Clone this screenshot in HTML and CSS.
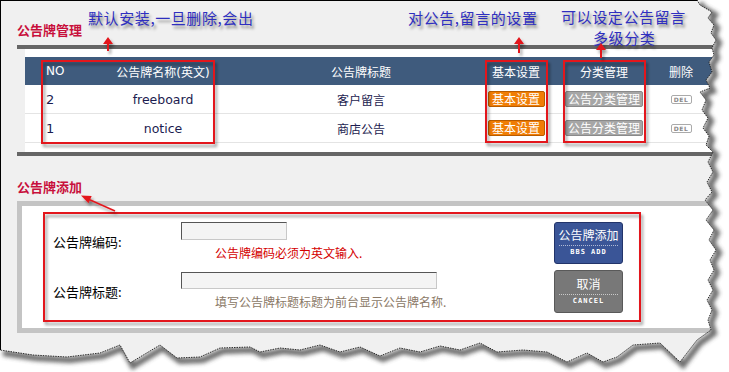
FILE: index.html
```html
<!DOCTYPE html>
<html lang="zh-CN">
<head>
<meta charset="utf-8">
<title>公告牌管理</title>
<link rel="stylesheet" href="styles.css">
</head>
<body>
<div class="page">
  <div class="sec-head sec-head-1"><h2 class="title">公告牌管理</h2></div>
  <div class="bar"></div>
  <div class="board">
    <div class="grid-row thead">
      <div class="cell cell-no">NO</div>
      <div class="cell">公告牌名称(英文)</div>
      <div class="cell">公告牌标题</div>
      <div class="cell">基本设置</div>
      <div class="cell">分类管理</div>
      <div class="cell">删除</div>
    </div>
    <div class="grid-row trow">
      <div class="cell cell-no">2</div>
      <div class="cell latin">freeboard</div>
      <div class="cell">客户留言</div>
      <div class="cell"><span class="tbtn tbtn-orange">基本设置</span></div>
      <div class="cell"><span class="tbtn tbtn-gray">公告分类管理</span></div>
      <div class="cell"><span class="del">DEL</span></div>
    </div>
    <div class="grid-row trow">
      <div class="cell cell-no">1</div>
      <div class="cell latin">notice</div>
      <div class="cell">商店公告</div>
      <div class="cell"><span class="tbtn tbtn-orange">基本设置</span></div>
      <div class="cell"><span class="tbtn tbtn-gray">公告分类管理</span></div>
      <div class="cell"><span class="del">DEL</span></div>
    </div>
  </div>
  <div class="bar"></div>
  <div class="sec-head sec-head-2"><h2 class="title">公告牌添加</h2></div>
  <div class="formbox">
    <div class="fields">
      <div class="frow">
        <div class="label">公告牌编码:</div>
        <div class="field">
          <span class="input input-short"></span>
          <div class="hint hint-red">公告牌编码必须为英文输入.</div>
        </div>
      </div>
      <div class="frow">
        <div class="label">公告牌标题:</div>
        <div class="field">
          <span class="input input-long"></span>
          <div class="hint hint-brown">填写公告牌标题标题为前台显示公告牌名称.</div>
        </div>
      </div>
    </div>
    <div class="btns">
      <div class="btn btn-blue">
        <div class="btn-main">公告牌添加</div>
        <div class="btn-sep"></div>
        <div class="btn-sub">BBS ADD</div>
      </div>
      <div class="btn btn-gray">
        <div class="btn-main">取消</div>
        <div class="btn-sep"></div>
        <div class="btn-sub">CANCEL</div>
      </div>
    </div>
  </div>
</div>

<div class="note note-1">默认安装,一旦删除,会出</div>
<div class="note note-2">对公告,留言的设置</div>
<div class="note note-3">可以设定公告留言</div>
<div class="note note-4">多级分类</div>

<svg class="overlay" width="729" height="372" viewBox="0 0 729 372">
  <defs>
    <filter id="sh" x="-20%" y="-20%" width="140%" height="140%">
      <feDropShadow dx="2" dy="3" stdDeviation="1.8" flood-color="#000" flood-opacity=".4"/>
    </filter>
  </defs>
  <g filter="url(#sh)" fill="none" stroke="#e3191f" stroke-width="2">
    <rect x="42" y="61" width="172" height="82"/>
    <rect x="486" y="61" width="61" height="81"/>
    <rect x="564" y="61" width="81" height="81"/>
    <rect x="44" y="213" width="596" height="108"/>
  </g>
  <g filter="url(#sh)" fill="#e3191f">
    <path d="M108 37 L113 44 L109 44 L109 51 L107 51 L107 44 L103 44 Z"/>
    <path d="M519 37 L524 44 L520 44 L520 53 L518 53 L518 44 L514 44 Z"/>
    <path d="M601 43 L606 50 L602 50 L602 58 L600 58 L600 50 L596 50 Z"/>
    <path d="M115 211 L88 199" stroke="#e3191f" stroke-width="1.6" fill="none"/>
    <polygon points="81,195.5 91.7,196 88.5,203.2"/>
  </g>
</svg>

<svg class="overlay tear" width="729" height="372" viewBox="0 0 729 372">
  <defs>
    <filter id="blur" x="-10%" y="-10%" width="120%" height="120%">
      <feGaussianBlur stdDeviation="2.2"/>
    </filter>
    <clipPath id="outside">
      <path d="M697,0 L700,5 L712,12 L708,18 L714,25 L711,33 L716,40 L712,48 L714,55 L709,62 L712,72 L706,80 L710,88 L700,92 L706,100 L702,110 L708,118 L703,128 L709,136 L706,145 L713,152 L708,162 L713,172 L707,182 L712,192 L705,200 L713,210 L706,220 L714,230 L709,240 L716,250 L710,260 L714,270 L708,280 L713,290 L707,300 L712,310 L708,320 L711,330 L697,340 L680,362 L660,343 L633,345 L617,357 L603,362 L587,353 L567,362 L547,352 L523,350 L497,352 L480,343 L460,350 L440,346 L420,352 L400,348 L380,356 L360,347 L340,352 L320,345 L300,350 L280,348 L260,352 L250,347 L220,348 L200,357 L177,358 L160,345 L140,357 L130,363 L120,345 L100,353 L67,357 L33,355 L0,350 L0,372 L729,372 L729,0 Z"/>
    </clipPath>
  </defs>
  <path fill="#ffffff" d="M697,0 L700,5 L712,12 L708,18 L714,25 L711,33 L716,40 L712,48 L714,55 L709,62 L712,72 L706,80 L710,88 L700,92 L706,100 L702,110 L708,118 L703,128 L709,136 L706,145 L713,152 L708,162 L713,172 L707,182 L712,192 L705,200 L713,210 L706,220 L714,230 L709,240 L716,250 L710,260 L714,270 L708,280 L713,290 L707,300 L712,310 L708,320 L711,330 L697,340 L680,362 L660,343 L633,345 L617,357 L603,362 L587,353 L567,362 L547,352 L523,350 L497,352 L480,343 L460,350 L440,346 L420,352 L400,348 L380,356 L360,347 L340,352 L320,345 L300,350 L280,348 L260,352 L250,347 L220,348 L200,357 L177,358 L160,345 L140,357 L130,363 L120,345 L100,353 L67,357 L33,355 L0,350 L0,372 L729,372 L729,0 Z"/>
  <g clip-path="url(#outside)">
    <path transform="translate(3,3)" fill="none" stroke="#444" stroke-width="6" opacity=".8" filter="url(#blur)" d="M697,0 L700,5 L712,12 L708,18 L714,25 L711,33 L716,40 L712,48 L714,55 L709,62 L712,72 L706,80 L710,88 L700,92 L706,100 L702,110 L708,118 L703,128 L709,136 L706,145 L713,152 L708,162 L713,172 L707,182 L712,192 L705,200 L713,210 L706,220 L714,230 L709,240 L716,250 L710,260 L714,270 L708,280 L713,290 L707,300 L712,310 L708,320 L711,330 L697,340 L680,362 L660,343 L633,345 L617,357 L603,362 L587,353 L567,362 L547,352 L523,350 L497,352 L480,343 L460,350 L440,346 L420,352 L400,348 L380,356 L360,347 L340,352 L320,345 L300,350 L280,348 L260,352 L250,347 L220,348 L200,357 L177,358 L160,345 L140,357 L130,363 L120,345 L100,353 L67,357 L33,355 L0,350"/>
  </g>
  <path fill="none" stroke="#000" stroke-width="0.8" stroke-dasharray="1.5 1" d="M697,0 L700,5 L712,12 L708,18 L714,25 L711,33 L716,40 L712,48 L714,55 L709,62 L712,72 L706,80 L710,88 L700,92 L706,100 L702,110 L708,118 L703,128 L709,136 L706,145 L713,152 L708,162 L713,172 L707,182 L712,192 L705,200 L713,210 L706,220 L714,230 L709,240 L716,250 L710,260 L714,270 L708,280 L713,290 L707,300 L712,310 L708,320 L711,330 L697,340 L680,362 L660,343 L633,345 L617,357 L603,362 L587,353 L567,362 L547,352 L523,350 L497,352 L480,343 L460,350 L440,346 L420,352 L400,348 L380,356 L360,347 L340,352 L320,345 L300,350 L280,348 L260,352 L250,347 L220,348 L200,357 L177,358 L160,345 L140,357 L130,363 L120,345 L100,353 L67,357 L33,355 L0,350"/>
</svg>
</body>
</html>
```

FILE: styles.css
```css
* {
  box-sizing: border-box;
}

body {
  margin: 0;
  width: 729px;
  height: 372px;
  overflow: hidden;
  position: relative;
  background: #fff;
  font-family: "DejaVu Sans", "Noto Sans CJK SC", sans-serif;
}

.page {
  width: 729px;
  height: 372px;
  background: #f0f0f0;
  border-top: 1px solid #000;
  border-left: 1px solid #000;
  padding-left: 16px;
}

.sec-head-1 {
  height: 44px;
  padding-top: 21px;
}

.sec-head-2 {
  height: 45px;
  padding-top: 23px;
}

.title {
  margin: 0;
  font-family: "Noto Sans CJK SC", sans-serif;
  font-size: 13px;
  line-height: 16px;
  font-weight: bold;
  color: #c8103c;
}

.bar {
  height: 4px;
  background: #666;
}

.board {
  margin-left: 8px;
  background: #fff;
  padding: 8px 0 9px;
}

.grid-row {
  display: grid;
  grid-template-columns: 55px 166px 230px 80px 96px 58px;
  align-items: center;
}

.thead {
  height: 28px;
  background: #3f5b7d;
  color: #fff;
  font-size: 12px;
}

.trow {
  height: 29px;
  border-bottom: 1px solid #e4e4e4;
  font-size: 12px;
  color: #1c1c50;
}

.cell {
  text-align: center;
  white-space: nowrap;
}

.cell-no {
  text-align: left;
  padding-left: 21px;
}

.trow .cell-no {
  font-size: 13px;
}

.latin {
  font-size: 12.5px;
}

.tbtn {
  display: inline-block;
  height: 16px;
  line-height: 14px;
  font-size: 12px;
  color: #fff;
  border-radius: 2px;
  font-family: "Noto Sans CJK SC", sans-serif;
  vertical-align: middle;
}

.tbtn-orange {
  width: 57px;
  background: #f07d05;
  border: 1px solid #b95c00;
}

.tbtn-gray {
  width: 78px;
  background: #a6a6a6;
  border: 1px solid #8a8a8a;
}

.del {
  display: inline-block;
  width: 21px;
  height: 9px;
  border: 1px solid #aaa;
  border-radius: 2px;
  background: #fff;
  color: #888;
  font-size: 6px;
  line-height: 7px;
  font-weight: bold;
  letter-spacing: 0.5px;
  vertical-align: middle;
}

.formbox {
  display: flex;
  border: 5px solid #c4c4c4;
  background: #fff;
  padding: 16px 0 15px 31px;
}

.fields {
  width: 501px;
  display: flex;
  flex-direction: column;
  gap: 11px;
}

.frow {
  display: grid;
  grid-template-columns: 128px 1fr;
  align-items: center;
}

.label {
  font-family: "Noto Sans CJK SC", sans-serif;
  font-size: 13px;
  color: #000;
}

.input {
  display: block;
  height: 18px;
  border: 1px solid;
  border-color: #555 #c8c8c8 #c8c8c8 #555;
  background: #f4f4f4;
}

.input-short {
  width: 106px;
}

.input-long {
  width: 256px;
  height: 17px;
}

.hint {
  margin: 5px 0 0 34px;
  font-family: "Noto Sans CJK SC", sans-serif;
  font-size: 12px;
  line-height: 16px;
  white-space: nowrap;
}

.hint-red {
  color: #d40000;
}

.hint-brown {
  color: #8a7866;
}

.btns {
  width: 69px;
  display: flex;
  flex-direction: column;
  gap: 6px;
}

.btn {
  border-radius: 3px;
  color: #fff;
  text-align: center;
  padding-top: 3px;
}

.btn-blue {
  height: 42px;
  background: #3a5597;
  border: 1px solid #22346a;
}

.btn-gray {
  height: 43px;
  background: #787878;
  border: 1px solid #595959;
  padding-top: 4px;
}

.btn-main {
  font-family: "Noto Sans CJK SC", sans-serif;
  font-size: 12px;
  line-height: 17px;
}

.btn-sep {
  margin: 2px 4px 0;
  border-top: 1px dotted rgba(255, 255, 255, 0.6);
}

.btn-sub {
  font-family: "DejaVu Sans Mono", monospace;
  font-size: 7px;
  line-height: 12px;
  font-weight: bold;
  letter-spacing: 1px;
}

.note {
  position: absolute;
  font-family: "Noto Sans CJK SC", sans-serif;
  font-size: 15px;
  line-height: 17px;
  letter-spacing: 0.6px;
  color: #2f2fbf;
  text-shadow: 2px 3px 3px rgba(0, 0, 0, 0.45);
  white-space: nowrap;
}

.note-1 {
  left: 88px;
  top: 9px;
}

.note-2 {
  left: 408px;
  top: 9px;
}

.note-3 {
  left: 561px;
  top: 8px;
}

.note-4 {
  left: 593px;
  top: 29px;
}

.overlay {
  position: absolute;
  left: 0;
  top: 0;
  pointer-events: none;
}
```
